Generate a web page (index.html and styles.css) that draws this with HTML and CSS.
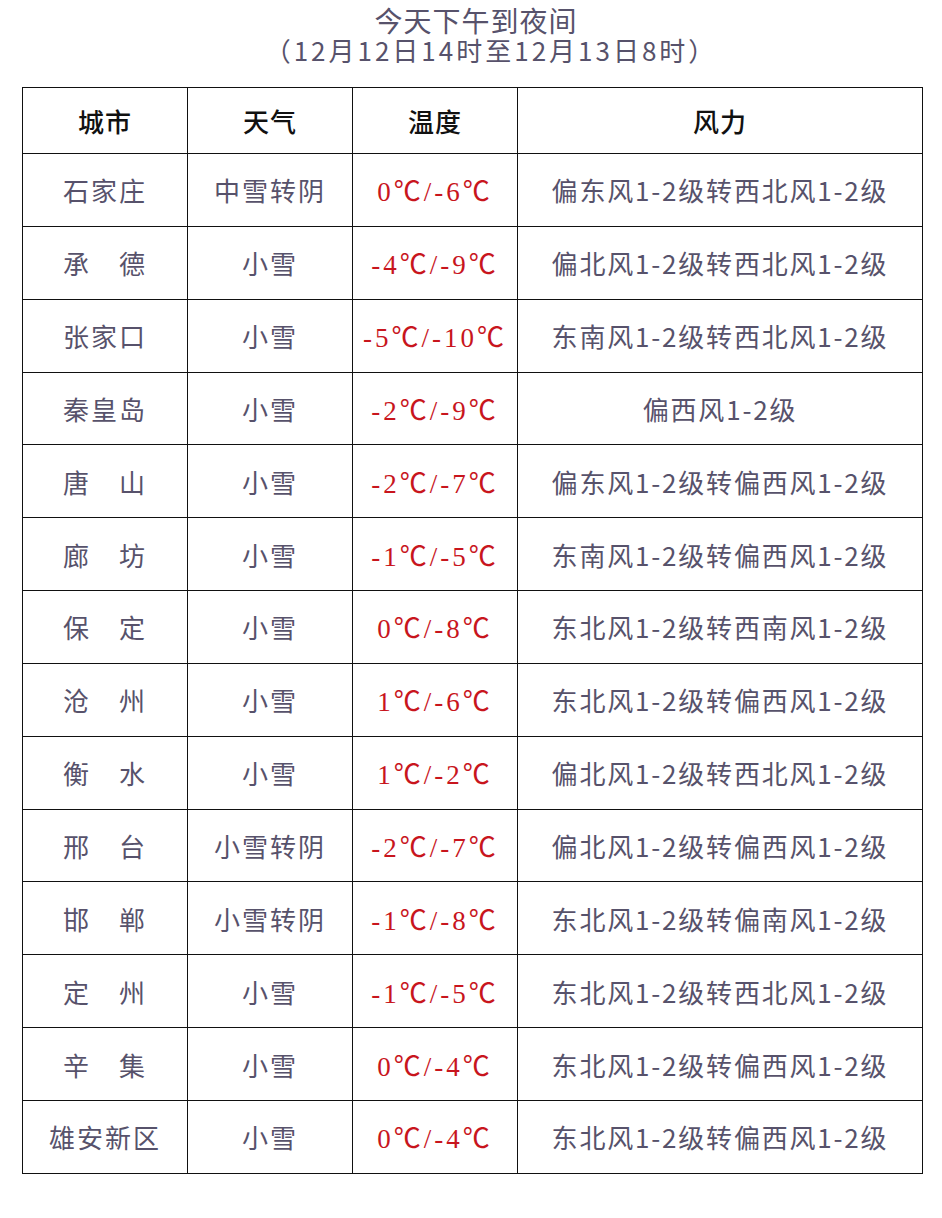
FILE: index.html
```html
<!DOCTYPE html>
<html lang="zh-CN">
<head>
<meta charset="utf-8">
<title>今天下午到夜间</title>
<link rel="stylesheet" href="styles.css">
</head>
<body>
<div class="page">
  <div class="title">
    <div class="t1">今天下午到夜间</div>
    <div class="t2">（12月12日14时至12月13日8时）</div>
  </div>
  <table class="wx">
    <colgroup><col class="c1"><col class="c2"><col class="c3"><col class="c4"></colgroup>
    <thead>
      <tr><th>城市</th><th>天气</th><th>温度</th><th>风力</th></tr>
    </thead>
    <tbody>
      <tr><td>石家庄</td><td>中雪转阴</td><td class="tmp">0℃/-6℃</td><td class="wind">偏东风1-2级转西北风1-2级</td></tr>
      <tr><td>承　德</td><td>小雪</td><td class="tmp">-4℃/-9℃</td><td class="wind">偏北风1-2级转西北风1-2级</td></tr>
      <tr><td>张家口</td><td>小雪</td><td class="tmp">-5℃/-10℃</td><td class="wind">东南风1-2级转西北风1-2级</td></tr>
      <tr><td>秦皇岛</td><td>小雪</td><td class="tmp">-2℃/-9℃</td><td class="wind">偏西风1-2级</td></tr>
      <tr><td>唐　山</td><td>小雪</td><td class="tmp">-2℃/-7℃</td><td class="wind">偏东风1-2级转偏西风1-2级</td></tr>
      <tr><td>廊　坊</td><td>小雪</td><td class="tmp">-1℃/-5℃</td><td class="wind">东南风1-2级转偏西风1-2级</td></tr>
      <tr><td>保　定</td><td>小雪</td><td class="tmp">0℃/-8℃</td><td class="wind">东北风1-2级转西南风1-2级</td></tr>
      <tr><td>沧　州</td><td>小雪</td><td class="tmp">1℃/-6℃</td><td class="wind">东北风1-2级转偏西风1-2级</td></tr>
      <tr><td>衡　水</td><td>小雪</td><td class="tmp">1℃/-2℃</td><td class="wind">偏北风1-2级转西北风1-2级</td></tr>
      <tr><td>邢　台</td><td>小雪转阴</td><td class="tmp">-2℃/-7℃</td><td class="wind">偏北风1-2级转偏西风1-2级</td></tr>
      <tr><td>邯　郸</td><td>小雪转阴</td><td class="tmp">-1℃/-8℃</td><td class="wind">东北风1-2级转偏南风1-2级</td></tr>
      <tr><td>定　州</td><td>小雪</td><td class="tmp">-1℃/-5℃</td><td class="wind">东北风1-2级转西北风1-2级</td></tr>
      <tr><td>辛　集</td><td>小雪</td><td class="tmp">0℃/-4℃</td><td class="wind">东北风1-2级转偏西风1-2级</td></tr>
      <tr><td>雄安新区</td><td>小雪</td><td class="tmp">0℃/-4℃</td><td class="wind">东北风1-2级转偏西风1-2级</td></tr>
    </tbody>
  </table>
</div>
</body>
</html>
```
FILE: styles.css
```css
html, body {
  margin: 0;
  padding: 0;
  background: #ffffff;
}
body {
  font-family: "Noto Sans CJK SC", "Noto Sans", sans-serif;
  color: #57526b;
}
.page {
  padding: 5px 20px 0 22px;
}
.title {
  text-align: center;
  color: #57526b;
  margin-left: 8px;
}
.t1 {
  font-size: 28px;
  line-height: 30px;
  letter-spacing: 1px;
}
.t2 {
  font-size: 26px;
  line-height: 30px;
  letter-spacing: 3px;
  padding-left: 30px;
}
.wx {
  margin-top: 22px;
  width: 900px;
  border-collapse: collapse;
  table-layout: fixed;
}
.c1, .c2, .c3 { width: 165px; }
.c4 { width: 405px; }
.wx th, .wx td {
  border: 1.5px solid #111;
  text-align: center;
  padding: 0;
  font-weight: normal;
  font-size: 26px;
  white-space: nowrap;
  letter-spacing: 2px;
}
.wx th {
  height: 65px;
  color: #111;
  font-weight: 500;
  letter-spacing: 1px;
}
.wx td {
  height: 71.85px;
}
.wx td.tmp {
  color: #c8151d;
  font-family: "Liberation Serif", "Noto Sans CJK SC", serif;
  font-size: 27px;
  letter-spacing: 3px;
}
.wx td.wind {
  letter-spacing: 1.8px;
}
```
